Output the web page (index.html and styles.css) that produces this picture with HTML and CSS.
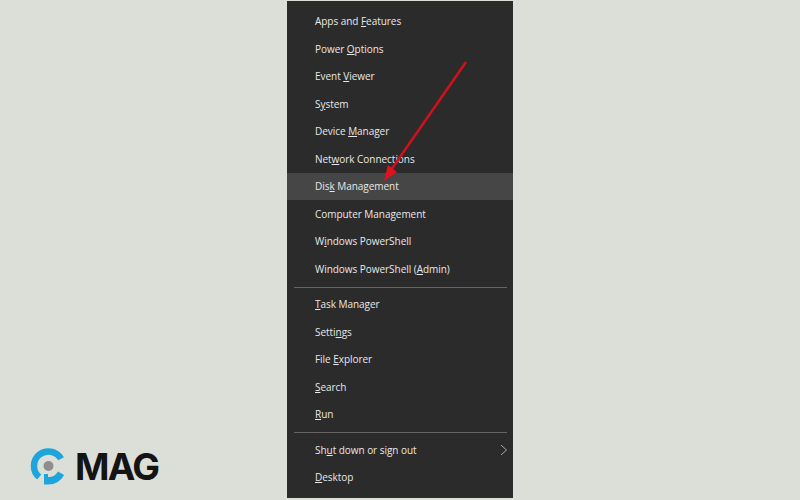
FILE: index.html
```html
<!DOCTYPE html>
<html lang="en">
<head>
<meta charset="utf-8">
<title>Quick Link Menu</title>
<link rel="stylesheet" href="styles.css">
</head>
<body>
<main class="stage">
  <nav class="menu">
    <div class="item"><span>Apps and <u>F</u>eatures</span></div>
    <div class="item"><span>Power <u>O</u>ptions</span></div>
    <div class="item"><span>Event <u>V</u>iewer</span></div>
    <div class="item"><span>S<u>y</u>stem</span></div>
    <div class="item"><span>Device <u>M</u>anager</span></div>
    <div class="item"><span>Net<u>w</u>ork Connections</span></div>
    <div class="item active"><span>Dis<u>k</u> Management</span></div>
    <div class="item"><span>Computer Mana<u>g</u>ement</span></div>
    <div class="item"><span>W<u>i</u>ndows PowerShell</span></div>
    <div class="item"><span>Windows PowerShell (<u>A</u>dmin)</span></div>
    <div class="sep"></div>
    <div class="item"><span><u>T</u>ask Manager</span></div>
    <div class="item"><span>Setti<u>n</u>gs</span></div>
    <div class="item"><span>File <u>E</u>xplorer</span></div>
    <div class="item"><span><u>S</u>earch</span></div>
    <div class="item"><span><u>R</u>un</span></div>
    <div class="sep"></div>
    <div class="item"><span>Sh<u>u</u>t down or sign out</span>
      <svg class="chev" width="8" height="12" viewBox="0 0 8 12"><path d="M1 1l5.5 5L1 11" fill="none" stroke="#a8a8a8" stroke-width="1"/></svg>
    </div>
    <div class="item"><span><u>D</u>esktop</span></div>
  </nav>
  <svg class="arrow" width="800" height="500" viewBox="0 0 800 500">
    <path d="M466 62L391 170" stroke="#d0101c" stroke-width="2.5" fill="none"/>
    <path d="M384 181L388 165L397 172Z" fill="#e0101c"/>
  </svg>
  <div class="logo">
    <svg class="mark" width="40" height="40" viewBox="0 0 40 40">
      <path d="M32.06 11.75A14.5 14.5 0 1 0 10.2 30.1" fill="none" stroke="#1ea6dc" stroke-width="6.5"/>
      <path d="M15 27H19V30A11 11 0 0 0 29 24.5L35.1 28A18 18 0 0 1 19 37.5H15Z" fill="#1ea6dc"/>
      <circle cx="19.5" cy="19" r="5" fill="#8e8e8e"/>
    </svg>
    <span class="word">MAG</span>
  </div>
</main>
</body>
</html>
```
FILE: styles.css
```css
html, body { margin: 0; padding: 0; }
body { background: #dcdfd7; font-family: "Open Sans", "Noto Sans", sans-serif; }
.stage { position: relative; width: 800px; height: 500px; overflow: hidden; display: flex; justify-content: center; }
.menu {
  box-sizing: border-box;
  width: 226px;
  margin: 1px 0 2px;
  padding: 6.5px 0 0 0;
  background: #2b2b2b;
  color: #e8e8e8;
  font-size: 10px;
  letter-spacing: -0.04px;
}
.item {
  height: 27.5px;
  display: flex;
  align-items: center;
  justify-content: space-between;
  padding: 0 5px 0 28px;
  white-space: nowrap;
}
.item u { text-underline-offset: 1px; }
.active { background: #464646; }
.sep { height: 1px; margin: 4px 6px 3px 7px; background: #666666; }
.arrow { position: absolute; left: 0; top: 0; pointer-events: none; }
.logo { position: absolute; left: 29px; top: 446px; display: flex; align-items: center; gap: 6px; }
.mark { display: block; }
.word { font-family: Inter, sans-serif; font-weight: 700; font-size: 37px; line-height: 42px; letter-spacing: -1.6px; color: #141414; }
```
